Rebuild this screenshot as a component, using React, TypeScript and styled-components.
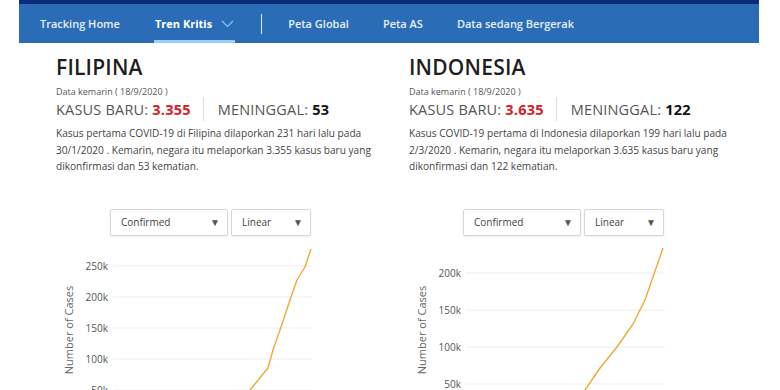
import styled, { createGlobalStyle } from "styled-components";

const GlobalStyle = createGlobalStyle`
  body {
    margin: 0;
    background: #fff;
    font-family: "Open Sans", "Noto Sans", sans-serif;
  }
`;

type Point = [number, number];

interface Country {
  name: string;
  date: string;
  cases: string;
  deaths: string;
  text: string[];
  ticks: { label: string; y: number }[];
  curve: Point[];
}

const countries: Country[] = [
  {
    name: "FILIPINA",
    date: "Data kemarin ( 18/9/2020 )",
    cases: "3.355",
    deaths: "53",
    text: [
      "Kasus pertama COVID-19 di Filipina dilaporkan 231 hari lalu pada",
      "30/1/2020 . Kemarin, negara itu melaporkan 3.355 kasus baru yang",
      "dikonfirmasi dan 53 kematian.",
    ],
    ticks: [
      { label: "250k", y: 26 },
      { label: "200k", y: 57 },
      { label: "150k", y: 88 },
      { label: "100k", y: 119 },
      { label: "50k", y: 150 },
    ],
    curve: [
      [180, 166],
      [194, 150],
      [212, 128],
      [217, 110],
      [224, 90],
      [234, 60],
      [241, 40],
      [249, 27],
      [255, 9],
    ],
  },
  {
    name: "INDONESIA",
    date: "Data kemarin ( 18/9/2020 )",
    cases: "3.635",
    deaths: "122",
    text: [
      "Kasus COVID-19 pertama di Indonesia dilaporkan 199 hari lalu pada",
      "2/3/2020 . Kemarin, negara itu melaporkan 3.635 kasus baru yang",
      "dikonfirmasi dan 122 kematian.",
    ],
    ticks: [
      { label: "200k", y: 33 },
      { label: "150k", y: 70 },
      { label: "100k", y: 107 },
      { label: "50k", y: 144 },
    ],
    curve: [
      [162, 166],
      [176, 150],
      [191, 128],
      [208, 107],
      [224, 84],
      [236, 60],
      [244, 37],
      [254, 8],
    ],
  },
];

const navItems = [
  { label: "Tracking Home" },
  { label: "Tren Kritis", active: true },
  { label: "divider" },
  { label: "Peta Global" },
  { label: "Peta AS" },
  { label: "Data sedang Bergerak" },
];

export default function App() {
  return (
    <>
      <GlobalStyle />
      <Nav>
        <NavList>
          {navItems.map((item) =>
            item.label === "divider" ? (
              <NavDivider key="div" />
            ) : (
              <NavItem key={item.label} $active={item.active}>
                {item.label}
                {item.active && (
                  <svg width="13" height="8" viewBox="0 0 13 8">
                    <path d="M1 1l5.5 5.5L12 1" fill="none" stroke="#8cc4f2" strokeWidth="1.2" />
                  </svg>
                )}
              </NavItem>
            )
          )}
        </NavList>
      </Nav>
      <Columns>
        {countries.map((c) => (
          <Column key={c.name}>
            <Title>{c.name}</Title>
            <DateLine>{c.date}</DateLine>
            <Stats>
              <Stat>
                KASUS BARU: <Red>{c.cases}</Red>
              </Stat>
              <StatDivider />
              <Stat>
                MENINGGAL: <Dark>{c.deaths}</Dark>
              </Stat>
            </Stats>
            <Body>
              {c.text.map((line) => (
                <div key={line}>{line}</div>
              ))}
            </Body>
            <Controls>
              <Select $width={118}>
                Confirmed <Arrow>▼</Arrow>
              </Select>
              <Select $width={80}>
                Linear <Arrow>▼</Arrow>
              </Select>
            </Controls>
            <Chart width="270" height="150" viewBox="0 0 270 150">
              <text
                x="17"
                y="90"
                transform="rotate(-90 17 90)"
                textAnchor="middle"
                fontSize="11"
                fill="#666"
                fontFamily="Open Sans, sans-serif"
              >
                Number of Cases
              </text>
              {c.ticks.map((t) => (
                <g key={t.label}>
                  <line x1="57" x2="256" y1={t.y} y2={t.y} stroke="#eee" strokeWidth="1" />
                  <text
                    x="52"
                    y={t.y + 3.5}
                    textAnchor="end"
                    fontSize="10"
                    fill="#555"
                    fontFamily="Open Sans, sans-serif"
                  >
                    {t.label}
                  </text>
                </g>
              ))}
              <polyline
                points={c.curve.map((p) => p.join(",")).join(" ")}
                fill="none"
                stroke="#f2a93b"
                strokeWidth="1.4"
                strokeLinejoin="round"
              />
            </Chart>
          </Column>
        ))}
      </Columns>
    </>
  );
}

const Nav = styled.nav`
  margin: 0 21px 0 19px;
  height: 43px;
  background: #2a6db6;
  border-top: 4px solid #0c2b7a;
  box-sizing: border-box;
`;

const NavList = styled.div`
  display: flex;
  align-items: stretch;
  height: 100%;
  padding-left: 21px;
`;

const NavItem = styled.div<{ $active?: boolean }>`
  display: flex;
  align-items: center;
  gap: 9px;
  margin-right: 34px;
  padding: 0 ${(p) => (p.$active ? "1px" : "0")};
  font-size: 11px;
  font-weight: ${(p) => (p.$active ? 700 : 600)};
  color: ${(p) => (p.$active ? "#fff" : "#e6effa")};
  border-bottom: 3px solid ${(p) => (p.$active ? "#9ccff8" : "transparent")};
  border-top: 3px solid transparent;
`;

const NavDivider = styled.div`
  width: 1px;
  height: 20px;
  background: #e8f0fa;
  align-self: center;
  margin: 0 26px 0 -8px;
`;

const Columns = styled.main`
  display: flex;
  padding-left: 56px;
`;

const Column = styled.section`
  width: 353px;
  display: flex;
  flex-direction: column;
  color: #222;
`;

const Title = styled.h1`
  margin: 11px 0 0;
  font-size: 21px;
  line-height: 26px;
  font-weight: 600;
  letter-spacing: 0.2px;
  color: #1e1e1e;
`;

const DateLine = styled.div`
  margin-top: 7px;
  font-size: 9px;
  line-height: 10px;
  color: #555;
`;

const Stats = styled.div`
  display: flex;
  align-items: center;
  height: 24px;
`;

const Stat = styled.div`
  font-size: 14.5px;
  font-weight: 400;
  color: #555;
  letter-spacing: 0.2px;
`;

const Red = styled.span`
  color: #d42027;
  font-weight: 700;
`;

const Dark = styled.span`
  color: #111;
  font-weight: 700;
`;

const StatDivider = styled.div`
  width: 1px;
  height: 24px;
  background: #ddd;
  margin: 0 14px 0 12px;
`;

const Body = styled.div`
  margin-top: 4px;
  font-size: 10.1px;
  line-height: 16.5px;
  color: #444;
  white-space: nowrap;
`;

const Controls = styled.div`
  display: flex;
  gap: 3px;
  margin: 34px 0 0 54px;
`;

const Select = styled.div<{ $width: number }>`
  width: ${(p) => p.$width}px;
  height: 27px;
  box-sizing: border-box;
  display: flex;
  align-items: center;
  justify-content: space-between;
  padding: 0 7px 0 10px;
  border: 1px solid #d6d6d6;
  border-radius: 2px;
  box-shadow: 0 1px 2px rgba(0, 0, 0, 0.08);
  font-size: 10px;
  color: #444;
`;

const Arrow = styled.span`
  font-size: 10px;
  color: #555;
`;

const Chart = styled.svg`
  display: block;
  margin-top: 4px;
`;
